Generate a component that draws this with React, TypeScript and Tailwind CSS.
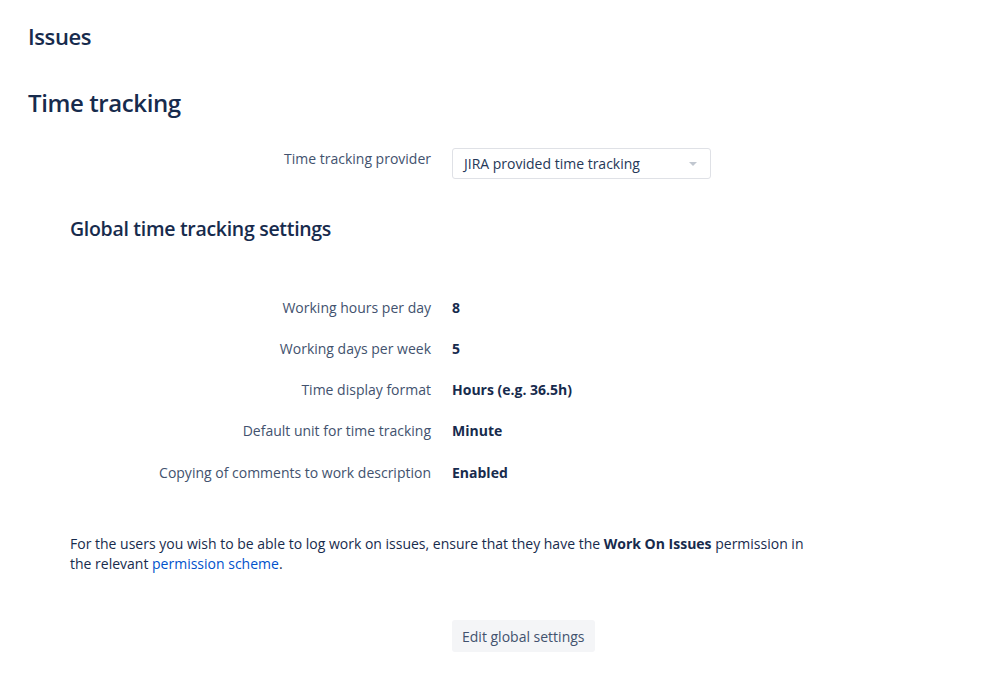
const settings = [
  { label: 'Working hours per day', value: '8' },
  { label: 'Working days per week', value: '5' },
  { label: 'Time display format', value: 'Hours (e.g. 36.5h)' },
  { label: 'Default unit for time tracking', value: 'Minute' },
  { label: 'Copying of comments to work description', value: 'Enabled' },
]

export default function App() {
  return (
    <div
      className="min-h-[683px] bg-white text-[#172b4d] text-[14px]"
      style={{ fontFamily: '"Open Sans", sans-serif' }}
    >
      <div className="px-[28px] pt-[21px]">
        <h1 className="text-[22px] font-semibold leading-[30px] tracking-[-0.4px]">Issues</h1>
        <h2 className="mt-[37px] text-[24px] font-semibold leading-[30px] tracking-[-0.4px]">Time tracking</h2>
      </div>

      {/* Provider */}
      <div className="mt-[30px] flex items-start">
        <div className="w-[431px] text-right text-[#42526e]">Time tracking provider</div>
        <div className="ml-[21px] flex h-[31px] w-[259px] items-center justify-between rounded-[3px] border border-[#dfe1e6] pl-[11px] pr-[13px]">
          <span className="text-[#253858]">JIRA provided time tracking</span>
          <span className="h-0 w-0 border-x-[4px] border-t-[4px] border-x-transparent border-t-[#c1c7d0]" />
        </div>
      </div>

      {/* Global settings */}
      <div className="px-[70px] pt-[37px]">
        <h3 className="text-[19.5px] font-semibold leading-[26px] tracking-[-0.3px]">Global time tracking settings</h3>
      </div>

      <div className="mt-[55px] flex flex-col gap-[21.25px]">
        {settings.map((s) => (
          <div key={s.label} className="flex h-[20px] items-center">
            <div className="w-[431px] text-right text-[#42526e]">{s.label}</div>
            <div className="ml-[21px] font-bold text-[#172b4d]">{s.value}</div>
          </div>
        ))}
      </div>

      <p className="mt-[52px] ml-[70px] w-[745px] leading-[20px] text-[#172b4d]">
        For the users you wish to be able to log work on issues, ensure that they have the{' '}
        <strong className="font-bold">Work On Issues</strong> permission in the relevant{' '}
        <a href="#" className="text-[#0052cc]">permission scheme</a>.
      </p>

      <div className="mt-[46px] ml-[452px] pb-[30px]">
        <button className="h-[32px] rounded-[3px] bg-[#f4f5f7] px-[10px] text-[14px] text-[#42526e]">
          Edit global settings
        </button>
      </div>
    </div>
  )
}
